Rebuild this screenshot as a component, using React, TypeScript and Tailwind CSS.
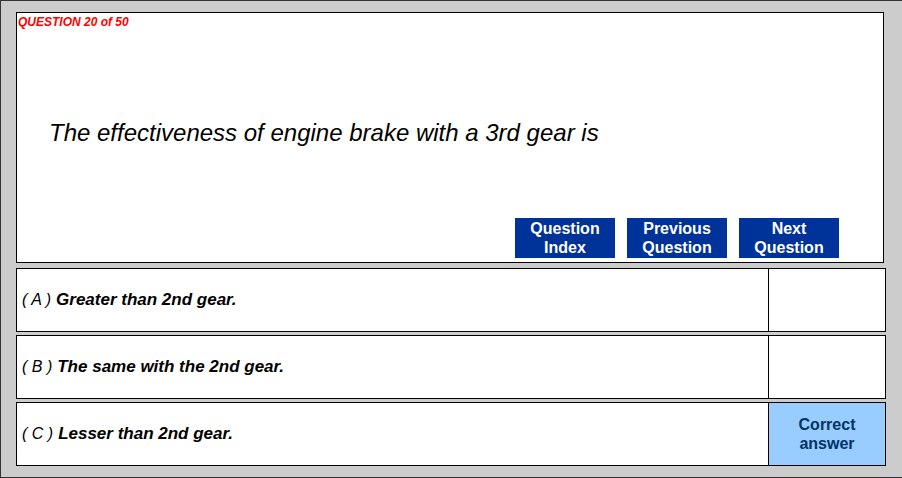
const answers = [
  { letter: "A", text: "Greater than 2nd gear.", correct: false },
  { letter: "B", text: "The same with the 2nd gear.", correct: false },
  { letter: "C", text: "Lesser than 2nd gear.", correct: true },
];

const navButtons = [
  ["Question", "Index"],
  ["Previous", "Question"],
  ["Next", "Question"],
];

export default function App() {
  return (
    <div className="w-[902px] h-[478px] bg-[#cccccc] border-t border-l border-b border-[#333333] pl-[15px] pt-[11px] font-['Liberation_Sans',Arial,sans-serif] overflow-hidden">
      <div className="w-[868px] h-[251px] bg-white border border-black flex flex-col">
        <div className="pl-[1px] pt-[2px] text-[12px] leading-[14px] font-bold italic text-[#ff0000]">
          QUESTION 20 of 50
        </div>
        <p className="mt-[90px] pl-[32px] text-[24px] leading-[28px] italic text-black">
          The effectiveness of engine brake with a 3rd gear is
        </p>
        <div className="mt-auto flex justify-end gap-[12px] pr-[44px] pb-[4px]">
          {navButtons.map(([a, b]) => (
            <button
              key={a + b}
              className="w-[100px] h-[40px] bg-[#003399] text-white text-[16px] leading-[19px] font-bold flex flex-col items-center justify-center"
            >
              <span>{a}</span>
              <span>{b}</span>
            </button>
          ))}
        </div>
      </div>

      <div className="mt-[5px] flex flex-col gap-[3px]">
        {answers.map((ans) => (
          <div key={ans.letter} className="w-[870px] h-[64px] bg-white border border-black flex">
            <div className="flex-1 flex items-center pl-[5px] text-[17px] italic text-black">
              <span className="font-light text-[16px]">( {ans.letter} )</span>
              <span className="ml-[5px] font-bold">{ans.text}</span>
            </div>
            <div
              className={
                "w-[117px] border-l border-black flex flex-col items-center justify-center text-[16px] leading-[19px] font-bold text-[#003366] " +
                (ans.correct ? "bg-[#99ccff]" : "bg-white")
              }
            >
              {ans.correct && (
                <>
                  <span>Correct</span>
                  <span>answer</span>
                </>
              )}
            </div>
          </div>
        ))}
      </div>
    </div>
  );
}
